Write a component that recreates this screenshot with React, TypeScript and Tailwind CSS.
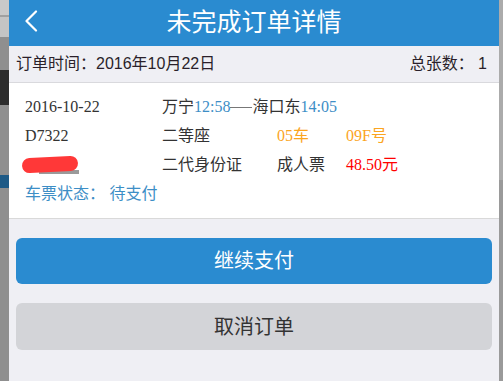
const serif = { fontFamily: '"Liberation Serif", "Noto Sans CJK SC", serif' }
const sans = { fontFamily: '"Liberation Sans", "Noto Sans CJK SC", sans-serif' }

function BackIcon() {
  return (
    <svg width="14" height="22" viewBox="0 0 14 22" fill="none">
      <path d="M12 1.5 L2.5 11 L12 20.5" stroke="white" strokeWidth="2.2" strokeLinecap="round" strokeLinejoin="round" />
    </svg>
  )
}

function LeftStrip() {
  return (
    <div className="w-[9px] flex-shrink-0 flex flex-col bg-[#8f8f8f]">
      <div className="h-[15px] bg-[#c9c9c9]" />
      <div className="h-[2px] bg-[#a0a0a0]" />
      <div className="h-[20px] bg-[#c4c4c4]" />
      <div className="h-[33px]" />
      <div className="h-[35px] bg-[#2c2c2c]" />
      <div className="h-[70px]" />
      <div className="h-[13px] bg-[#1e5a86]" />
      <div className="flex-1" />
    </div>
  )
}

function RightStrip() {
  return (
    <div className="w-[4px] flex-shrink-0 flex flex-col bg-[#9a9a9a]">
      <div className="h-[180px] bg-[#ababab]" />
    </div>
  )
}

export default function App() {
  return (
    <div className="flex w-[503px] h-[381px] overflow-hidden">
      <LeftStrip />
      <div className="flex-1 flex flex-col bg-[#efeff4]">
        <div className="h-[46px] bg-[#2a8bd0] flex items-center relative">
          <div className="absolute left-[15px] top-[10px]">
            <BackIcon />
          </div>
          <p className="w-full text-center text-white text-[25px]" style={sans}>
            未完成订单详情
          </p>
        </div>

        <div className="h-[37px] flex items-center justify-between pl-[7px] pr-[12px] border-b border-[#d9d9dd] text-[#2a1f2a] text-[16px]" style={sans}>
          <span>订单时间：2016年10月22日</span>
          <span>总张数： 1</span>
        </div>

        <div className="bg-white pl-[16px] pt-[14px] h-[136px] border-b border-[#d9d9d9] text-[16px] text-[#333]" style={serif}>
          <div className="grid grid-cols-[137px_115px_69px_1fr] gap-y-[9px] leading-[20px]">
            <span>2016-10-22</span>
            <span className="col-span-3 flex items-center">
              万宁<span className="text-[#3d8ec6]">12:58</span>
              <span className="inline-block w-[22px] h-px bg-[#777]" />
              海口东<span className="text-[#3d8ec6]">14:05</span>
            </span>

            <span>D7322</span>
            <span>二等座</span>
            <span className="text-[#fba51f]">05车</span>
            <span className="text-[#fba51f]">09F号</span>

            <span className="flex items-center">
              <span className="relative inline-block w-[56px] h-[18px]">
                <span className="absolute left-[14px] bottom-[0px] w-[40px] h-[4px] bg-[#9a9a9a]" />
                <span className="absolute left-[-3px] top-[1px] w-[56px] h-[15px] rounded-full bg-[#ff3838] -rotate-3" />
              </span>
            </span>
            <span>二代身份证</span>
            <span>成人票</span>
            <span className="text-[#ff0000]">48.50元</span>
          </div>
          <p className="mt-[7px] text-[16px] text-[#3d8ec6]" style={sans}>
            车票状态： 待支付
          </p>
        </div>

        <div className="px-[7px] pt-[19px] flex flex-col gap-[19px]" style={sans}>
          <button className="h-[46px] rounded-[6px] bg-[#2a8bd0] text-white text-[20px]">
            继续支付
          </button>
          <button className="h-[47px] rounded-[6px] bg-[#d3d4d8] text-[#333] text-[20px]">
            取消订单
          </button>
        </div>
      </div>
      <RightStrip />
    </div>
  )
}
